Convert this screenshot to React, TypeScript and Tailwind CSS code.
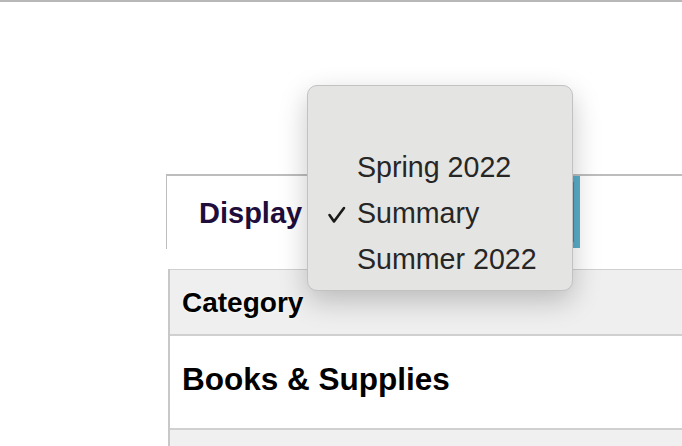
import React from 'react';

const options = ['Spring 2022', 'Summary', 'Summer 2022'];

function Check() {
  return (
    <svg width="20" height="18" viewBox="0 0 20 18" className="absolute left-[-30px] top-[16px]">
      <path d="M2.5 9 L7 15.5 L17 2" fill="none" stroke="#1a1a1a" strokeWidth="2.6" strokeLinecap="round" strokeLinejoin="round" />
    </svg>
  );
}

export default function App() {
  return (
    <div
      className="relative h-[446px] w-[682px] overflow-hidden bg-white border-t-2 border-[#b8b8b8]"
      style={{ fontFamily: '"Liberation Sans", Arial, sans-serif' }}
    >
      <div className="ml-[166px] mt-[172px]">
        {/* display filter bar */}
        <div className="flex h-[75px] border-t-2 border-l border-[#bdbdbd]">
          <span className="ml-[32px] self-center text-[29px] leading-[32px] font-bold text-[#1f0d3b]">Display</span>
          <div className="ml-[18px] h-[72px] w-[260px] bg-[#5aaecb] py-[6px] pr-[6px]">
            <div className="h-full w-full border-2 border-[#6a6db6] bg-[#7b7fc4]" />
          </div>
        </div>

        {/* table */}
        <div className="mt-[20px] ml-[2px] border-l-2 border-[#c8c8c8]">
          <div className="h-[67px] border-t border-b-2 border-[#d0d0d0] bg-[#efefef] pl-[12px] pt-[17px]">
            <span className="text-[28px] leading-[32px] font-bold text-black [text-shadow:0_0_3px_#fff]">Category</span>
          </div>
          <div className="h-[94px] border-b-2 border-[#d0d0d0] bg-white pl-[12px] pt-[25px]">
            <span className="text-[31.5px] leading-[36px] font-bold text-black">Books &amp; Supplies</span>
          </div>
          <div className="h-[40px] bg-[#f0f0f0]" />
        </div>
      </div>

      {/* native select popup */}
      <div className="absolute left-[307px] top-[83px] w-[266px] rounded-[10px] border border-[#c2c2c2] bg-[#e4e4e2] pl-[49px] pt-[58px] pb-[8px] shadow-[0_10px_28px_rgba(0,0,0,0.22)]">
        {options.map((o) => (
          <div key={o} className="relative text-[28.6px] leading-[46px] text-[#262626]">
            {o === 'Summary' && <Check />}
            {o}
          </div>
        ))}
      </div>
    </div>
  );
}
